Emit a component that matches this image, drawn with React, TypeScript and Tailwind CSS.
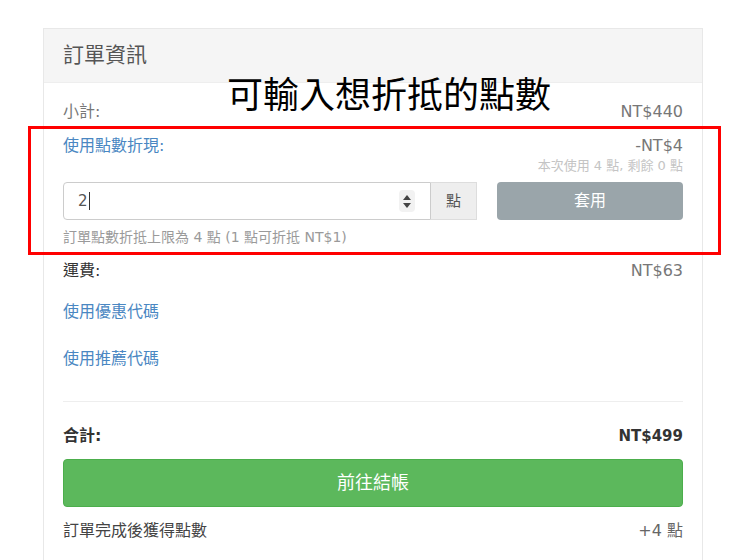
import React from 'react';

const FONT = { fontFamily: '"DejaVu Sans", "Noto Sans CJK TC", sans-serif' };

function Spinner() {
  return (
    <div className="flex h-[22px] w-[16px] flex-col items-center justify-center gap-[3px] rounded-sm bg-[#f2f2f2]">
      <svg width="8" height="5" viewBox="0 0 8 5">
        <path d="M4 0 L8 5 L0 5 Z" fill="#444" />
      </svg>
      <svg width="8" height="5" viewBox="0 0 8 5">
        <path d="M0 0 L8 0 L4 5 Z" fill="#444" />
      </svg>
    </div>
  );
}

export default function App() {
  return (
    <div className="relative h-[560px] w-[750px] overflow-hidden bg-white" style={FONT}>
      <div className="pl-[43px] pt-[28px]">
        <div className="w-[660px] border border-[#e8e8e8]">
          <div className="flex h-[54px] items-center border-b border-[#eeeeee] bg-[#f5f5f5] px-[19px] text-[21px] text-[#555]">
            訂單資訊
          </div>
          <div className="px-[19px] pb-[40px] pt-[19px] text-[16px] leading-[20px] text-[#777]">
            <div className="flex justify-between">
              <span>小計:</span>
              <span>NT$440</span>
            </div>

            <div className="mt-[14px] flex justify-between">
              <span className="text-[#4a87c2]">使用點數折現:</span>
              <span>-NT$4</span>
            </div>
            <div className="mt-[2px] text-right text-[13px] leading-[16px] text-[#c4c4c4]">
              本次使用 4 點, 剩餘 0 點
            </div>
            <div className="mt-[8px] flex h-[38px]">
              <div className="flex flex-1 items-center rounded-l-[4px] border border-[#cccccc] pl-[14px] pr-[15px]">
                <span className="flex flex-1 items-center text-[15px] text-[#555]">
                  2<span className="ml-[1px] inline-block h-[18px] w-[1px] bg-[#333]" />
                </span>
                <Spinner />
              </div>
              <div className="flex w-[46px] items-center justify-center border border-l-0 border-[#dddddd] bg-[#eeeeee] text-[15px] text-[#555]">
                點
              </div>
              <button className="ml-[20px] w-[186px] rounded-[4px] bg-[#9aa5aa] text-[16px] text-white">
                套用
              </button>
            </div>
            <div className="mt-[8px] text-[14px] leading-[18px] text-[#9a9a9a]">
              訂單點數折抵上限為 4 點 (1 點可折抵 NT$1)
            </div>

            <div className="mt-[15px] flex justify-between">
              <span className="text-[#333]">運費:</span>
              <span>NT$63</span>
            </div>
            <div className="mt-[21px] text-[#4a87c2]">使用優惠代碼</div>
            <div className="mt-[27px] text-[#4a87c2]">使用推薦代碼</div>

            <div className="mt-[32px] h-px bg-[#eeeeee]" />

            <div className="mt-[24px] flex items-center justify-between font-bold text-[#333]">
              <span>合計:</span>
              <span className="text-[15px]">NT$499</span>
            </div>
            <button className="mt-[13px] h-[48px] w-full rounded-[4px] border border-[#4cae4c] bg-[#5cb85c] text-[18px] text-white">
              前往結帳
            </button>
            <div className="mt-[14px] flex justify-between text-[#444]">
              <span>訂單完成後獲得點數</span>
              <span className="text-[#666]">+4 點</span>
            </div>
          </div>
        </div>
      </div>

      <div className="absolute left-[28px] top-[126px] h-[129px] w-[693px] border-[3px] border-[#ff0000]" />
      <div
        className="absolute left-[227px] top-[70px] text-[36px] leading-[44px] text-black"
        style={{ fontFamily: '"Noto Sans CJK TC", sans-serif' }}
      >
        可輸入想折抵的點數
      </div>
    </div>
  );
}
